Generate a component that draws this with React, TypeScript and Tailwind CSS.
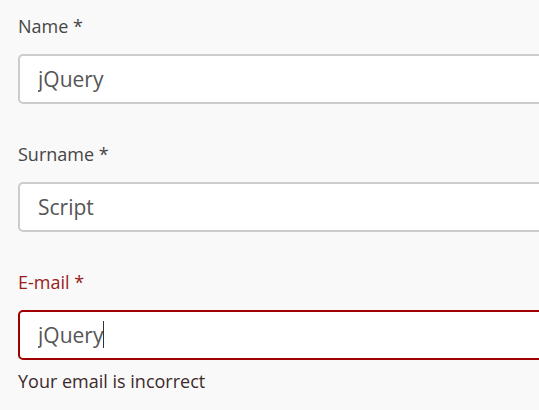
import { useState } from "react";

const Field = ({
  label,
  value,
  error,
}: {
  label: string;
  value: string;
  error?: string;
}) => {
  const [text, setText] = useState(value);
  return (
    <div className="flex flex-col">
      <label
        className={`text-[18px] leading-[24px] ${error ? "text-[#9b1a1a]" : "text-[#454545]"}`}
      >
        {label} *
      </label>
      <div className="relative mt-[16px]">
        <input
          value={text}
          onChange={(e) => setText(e.target.value)}
          className={`h-[50px] w-[600px] rounded-[5px] border-2 bg-white px-[18px] text-[21px] text-[#555] outline-none ${
            error ? "border-[#a00000]" : "border-[#cccccc]"
          }`}
        />
        {error && <span className="absolute left-[85px] top-[11px] h-[27px] w-px bg-[#333]" />}
      </div>
      {error && <p className="mt-[9px] text-[18px] leading-[24px] text-[#3d2a2a]">{error}</p>}
    </div>
  );
};

export default function App() {
  return (
    <div
      className="h-[410px] w-full overflow-hidden bg-[#f9f9f9] pl-[18px] pt-[14px]"
      style={{ fontFamily: '"Open Sans", sans-serif' }}
    >
      <div className="flex flex-col gap-[38px]">
        <Field label="Name" value="jQuery" />
        <Field label="Surname" value="Script" />
        <Field label="E-mail" value="jQuery" error="Your email is incorrect" />
      </div>
    </div>
  );
}
